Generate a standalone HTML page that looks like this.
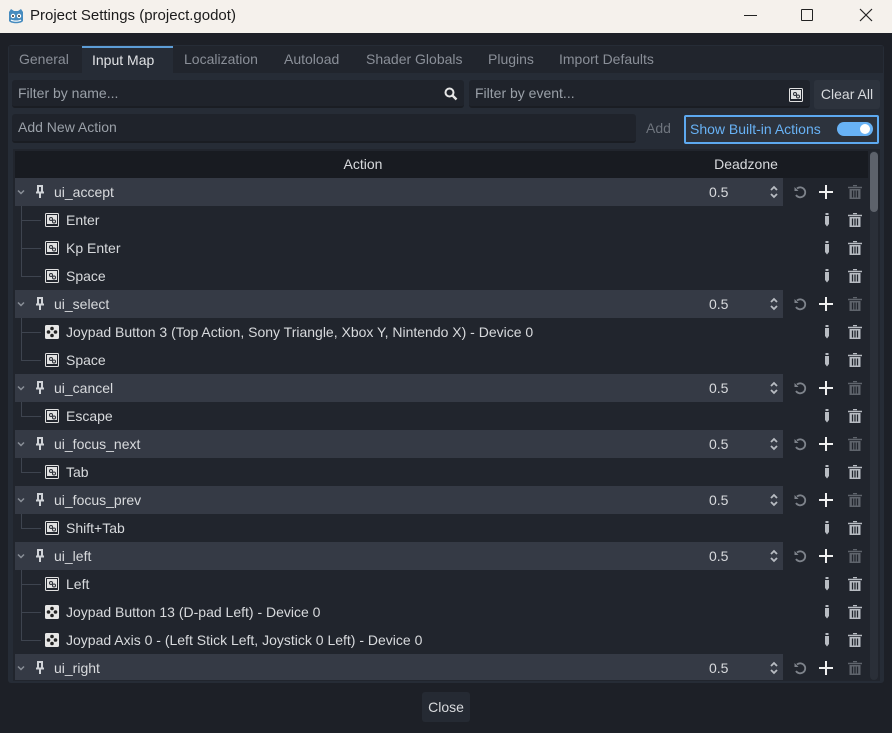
<!DOCTYPE html>
<html><head><meta charset="utf-8">
<style>
*{margin:0;padding:0;box-sizing:border-box}
body{width:892px;height:733px;overflow:hidden;background:#1d2027;font-family:"Liberation Sans",sans-serif;font-size:14px;color:#d8dadd;position:relative}
.a{position:absolute}
#title{left:0;top:0;width:892px;height:33px;background:#f5f1ec;color:#1b1b1b;font-size:15px}
#panel{left:8px;top:45px;width:876px;height:638px;background:#262c36;border-radius:3px}
.tab{top:46px;height:27px;line-height:27px;color:#8a8f98;padding:0 10px}
.inp{background:#1f232b;border-radius:3px;border-bottom:2px solid #1a1d23;color:#9aa0a8;padding-left:6px;line-height:27px}
#tree{left:13px;top:149px;width:867px;height:532px;background:#21252d}
.hdr{top:151px;height:27px;background:#181b21;color:#d8dadd;line-height:27px;text-align:center}
.row{left:15px;width:853px;height:28px}
.act{background:#353a45;width:768px;height:28px;position:absolute;left:0;top:0}
.nm{position:absolute;top:0;line-height:28px}
.ic{position:absolute}
.vl{position:absolute;left:0;top:0;width:1px;background:#3e444f}
.hl{position:absolute;height:1px;background:#3e444f}
</style></head><body>
<svg width="0" height="0" style="position:absolute">
<defs>
<symbol id="pin" viewBox="0 0 12 14"><path d="M3 1h6M4 1v6M8 1v6M2 7.5h8M6 8v5" stroke="#d0d3d8" stroke-width="2" fill="none"/></symbol>
<symbol id="chev" viewBox="0 0 10 10"><path d="M2 3.5l3 3 3-3" stroke="#8a8f98" stroke-width="1.5" fill="none"/></symbol>
<symbol id="key" viewBox="0 0 14 14"><rect x="0.5" y="0.5" width="13" height="13" fill="none" stroke="#e0e0e0" rx="1"/><rect x="2" y="2" width="10" height="9" fill="#e0e0e0"/><circle cx="6" cy="6" r="2" fill="#2a2e36"/><circle cx="9" cy="8.5" r="2" fill="#2a2e36"/><circle cx="6" cy="6" r="1" fill="#e0e0e0"/><circle cx="9" cy="8.5" r="1" fill="#e0e0e0"/></symbol>
<symbol id="joy" viewBox="0 0 14 14"><rect width="14" height="14" rx="1.5" fill="#e6e6e6"/><circle cx="7" cy="3.5" r="1.8" fill="#222"/><circle cx="7" cy="10.5" r="1.8" fill="#222"/><circle cx="3.5" cy="7" r="1.8" fill="#222"/><circle cx="10.5" cy="7" r="1.8" fill="#222"/></symbol>
<symbol id="spin" viewBox="0 0 10 16"><path d="M2 6l3-3 3 3M2 10l3 3 3-3" stroke="#b8bcc2" stroke-width="1.8" fill="none"/></symbol>
<symbol id="rev" viewBox="0 0 14 14"><path d="M4 3.5A5 5 0 1 1 3 10" stroke="#7e838b" stroke-width="1.8" fill="none"/><path d="M1.5 2v4h4z" fill="#7e838b"/></symbol>
<symbol id="plus" viewBox="0 0 14 14"><path d="M7 0v14M0 7h14" stroke="#f0f0f0" stroke-width="2"/></symbol>
<symbol id="trash" viewBox="0 0 14 14"><path d="M5 0.5h4M0 2.5h14" stroke="currentColor" stroke-width="1.6"/><path d="M1.5 4h11v10h-11z" fill="currentColor"/><path d="M4.5 5.5v7M7 5.5v7M9.5 5.5v7" stroke="#21252d" stroke-width="1.3"/></symbol>
<symbol id="pen" viewBox="0 0 6 14"><path d="M1 3h4v8l-2 2.5-2-2.5z" fill="#b8bcc2"/><rect x="1.5" y="0" width="3" height="2" fill="#b8bcc2"/></symbol>
</defs></svg>

<div id="title" class="a">
<svg class="a" style="left:7px;top:7px" width="18" height="18" viewBox="0 0 18 18"><path d="M2 5l2-3 3 2h4l3-2 2 3v9c-2 3-12 3-14 0z" fill="#478cbf"/><circle cx="6" cy="9" r="2.2" fill="#fff"/><circle cx="12" cy="9" r="2.2" fill="#fff"/><circle cx="6" cy="9" r="1" fill="#333"/><circle cx="12" cy="9" r="1" fill="#333"/><path d="M4 13c2 1.5 8 1.5 10 0" stroke="#fff" stroke-width="1.2" fill="none"/></svg>
<div class="a" style="left:30px;top:7px">Project Settings (project.godot)</div>
<div class="a" style="left:744px;top:15px;width:13px;height:1px;background:#222"></div>
<div class="a" style="left:801px;top:9px;width:12px;height:12px;border:1px solid #222;border-radius:1px"></div>
<svg class="a" style="left:859px;top:8px" width="14" height="14"><path d="M1 1l12 12M13 1L1 13" stroke="#222" stroke-width="1.2"/></svg>
</div>

<div id="panel" class="a"></div>
<div class="a" style="left:9px;top:46px;width:874px;height:27px;background:#21252d"></div>
<div class="a tab" style="left:9px">General</div>
<div class="a tab" style="left:82px;width:91px;background:#262c36;color:#e0e2e5;border-top:2px solid #5d9dd6;line-height:25px">Input Map</div>
<div class="a tab" style="left:174px">Localization</div>
<div class="a tab" style="left:274px">Autoload</div>
<div class="a tab" style="left:356px">Shader Globals</div>
<div class="a tab" style="left:478px">Plugins</div>
<div class="a tab" style="left:549px">Import Defaults</div>

<div class="a inp" style="left:12px;top:80px;width:452px;height:28px">Filter by name...</div>
<svg class="a" style="left:444px;top:87px" width="14" height="14"><circle cx="5.5" cy="5.5" r="4" stroke="#e6e6e6" stroke-width="2" fill="none"/><path d="M8.5 8.5l4 4" stroke="#e6e6e6" stroke-width="2.4"/></svg>
<div class="a inp" style="left:469px;top:80px;width:341px;height:28px">Filter by event...</div>
<svg class="a" style="left:789px;top:88px" width="14" height="14"><use href="#key"/></svg>
<div class="a" style="left:814px;top:80px;width:66px;height:29px;background:#2d333d;border-radius:3px;line-height:29px;text-align:center;color:#d8dadd">Clear All</div>
<div class="a inp" style="left:12px;top:114px;width:624px;height:29px">Add New Action</div>
<div class="a" style="left:646px;top:114px;line-height:29px;color:#6e747d">Add</div>
<div class="a" style="left:684px;top:115px;width:195px;height:29px;border:2px solid #5da9f0;border-radius:2px;background:#2d333d;color:#68b2f5;line-height:25px;padding-left:4px">Show Built-in Actions</div>
<div class="a" style="left:837px;top:122px;width:36px;height:14px;border-radius:7px;background:#68b2f5"></div>
<div class="a" style="left:860px;top:124px;width:10px;height:10px;border-radius:5px;background:#fff"></div>

<div id="tree" class="a"></div>
<div class="a hdr" style="left:15px;width:696px">Action</div>
<div class="a hdr" style="left:704px;width:84px;background:#181b21">Deadzone</div>
<div class="a" style="left:788px;top:151px;width:80px;height:27px;background:#181b21"></div>
<div class="a" style="left:870px;top:151px;width:8px;height:529px;background:#2a2f38;border-radius:4px"></div>
<div class="a" style="left:870px;top:152px;width:8px;height:60px;background:#5d626b;border-radius:4px"></div>

<div class="a" style="left:15px;top:178px;width:853px;height:502px;overflow:hidden">
<!-- tree content, positioned relative, y offset = absolute-178 -->
<div style="position:relative">
<!-- helper: action rows -->
<div class="a" style="left:0;top:0;width:853px;height:28px"><div class="act"></div><svg class="ic" style="left:1px;top:9px" width="10" height="10"><use href="#chev"/></svg><svg class="ic" style="left:19px;top:7px" width="12" height="14"><use href="#pin"/></svg><div class="nm" style="left:39px">ui_accept</div><div class="nm" style="left:694px">0.5</div><svg class="ic" style="left:754px;top:6px" width="10" height="16"><use href="#spin"/></svg><svg class="ic" style="left:778px;top:7px" width="14" height="14"><use href="#rev"/></svg><svg class="ic" style="left:804px;top:7px" width="14" height="14"><use href="#plus"/></svg><svg class="ic" style="left:833px;top:7px;color:#5f646c" width="14" height="14"><use href="#trash"/></svg></div>
<div class="a" style="left:0;top:28px;width:853px;height:84px"><div class="vl" style="left:6px;top:0;height:70px"></div><div class="hl" style="left:6px;top:14px;width:20px"></div><div class="hl" style="left:6px;top:42px;width:20px"></div><div class="hl" style="left:6px;top:70px;width:20px"></div>
<svg class="ic" style="left:30px;top:7px" width="14" height="14"><use href="#key"/></svg><div class="nm" style="left:51px">Enter</div>
<svg class="ic" style="left:30px;top:35px" width="14" height="14"><use href="#key"/></svg><div class="nm" style="left:51px;top:28px">Kp Enter</div>
<svg class="ic" style="left:30px;top:63px" width="14" height="14"><use href="#key"/></svg><div class="nm" style="left:51px;top:56px">Space</div>
<svg class="ic" style="left:809px;top:7px" width="6" height="14"><use href="#pen"/></svg><svg class="ic" style="left:833px;top:7px;color:#b8bcc2" width="14" height="14"><use href="#trash"/></svg>
<svg class="ic" style="left:809px;top:35px" width="6" height="14"><use href="#pen"/></svg><svg class="ic" style="left:833px;top:35px;color:#b8bcc2" width="14" height="14"><use href="#trash"/></svg>
<svg class="ic" style="left:809px;top:63px" width="6" height="14"><use href="#pen"/></svg><svg class="ic" style="left:833px;top:63px;color:#b8bcc2" width="14" height="14"><use href="#trash"/></svg></div>

<div class="a" style="left:0;top:112px;width:853px;height:28px"><div class="act"></div><svg class="ic" style="left:1px;top:9px" width="10" height="10"><use href="#chev"/></svg><svg class="ic" style="left:19px;top:7px" width="12" height="14"><use href="#pin"/></svg><div class="nm" style="left:39px">ui_select</div><div class="nm" style="left:694px">0.5</div><svg class="ic" style="left:754px;top:6px" width="10" height="16"><use href="#spin"/></svg><svg class="ic" style="left:778px;top:7px" width="14" height="14"><use href="#rev"/></svg><svg class="ic" style="left:804px;top:7px" width="14" height="14"><use href="#plus"/></svg><svg class="ic" style="left:833px;top:7px;color:#5f646c" width="14" height="14"><use href="#trash"/></svg></div>
<div class="a" style="left:0;top:140px;width:853px;height:56px"><div class="vl" style="left:6px;height:42px"></div><div class="hl" style="left:6px;top:14px;width:20px"></div><div class="hl" style="left:6px;top:42px;width:20px"></div>
<svg class="ic" style="left:30px;top:7px" width="14" height="14"><use href="#joy"/></svg><div class="nm" style="left:51px">Joypad Button 3 (Top Action, Sony Triangle, Xbox Y, Nintendo X) - Device 0</div>
<svg class="ic" style="left:30px;top:35px" width="14" height="14"><use href="#key"/></svg><div class="nm" style="left:51px;top:28px">Space</div>
<svg class="ic" style="left:809px;top:7px" width="6" height="14"><use href="#pen"/></svg><svg class="ic" style="left:833px;top:7px;color:#b8bcc2" width="14" height="14"><use href="#trash"/></svg>
<svg class="ic" style="left:809px;top:35px" width="6" height="14"><use href="#pen"/></svg><svg class="ic" style="left:833px;top:35px;color:#b8bcc2" width="14" height="14"><use href="#trash"/></svg></div>

<div class="a" style="left:0;top:196px;width:853px;height:28px"><div class="act"></div><svg class="ic" style="left:1px;top:9px" width="10" height="10"><use href="#chev"/></svg><svg class="ic" style="left:19px;top:7px" width="12" height="14"><use href="#pin"/></svg><div class="nm" style="left:39px">ui_cancel</div><div class="nm" style="left:694px">0.5</div><svg class="ic" style="left:754px;top:6px" width="10" height="16"><use href="#spin"/></svg><svg class="ic" style="left:778px;top:7px" width="14" height="14"><use href="#rev"/></svg><svg class="ic" style="left:804px;top:7px" width="14" height="14"><use href="#plus"/></svg><svg class="ic" style="left:833px;top:7px;color:#5f646c" width="14" height="14"><use href="#trash"/></svg></div>
<div class="a" style="left:0;top:224px;width:853px;height:28px"><div class="vl" style="left:6px;height:14px"></div><div class="hl" style="left:6px;top:14px;width:20px"></div>
<svg class="ic" style="left:30px;top:7px" width="14" height="14"><use href="#key"/></svg><div class="nm" style="left:51px">Escape</div>
<svg class="ic" style="left:809px;top:7px" width="6" height="14"><use href="#pen"/></svg><svg class="ic" style="left:833px;top:7px;color:#b8bcc2" width="14" height="14"><use href="#trash"/></svg></div>

<div class="a" style="left:0;top:252px;width:853px;height:28px"><div class="act"></div><svg class="ic" style="left:1px;top:9px" width="10" height="10"><use href="#chev"/></svg><svg class="ic" style="left:19px;top:7px" width="12" height="14"><use href="#pin"/></svg><div class="nm" style="left:39px">ui_focus_next</div><div class="nm" style="left:694px">0.5</div><svg class="ic" style="left:754px;top:6px" width="10" height="16"><use href="#spin"/></svg><svg class="ic" style="left:778px;top:7px" width="14" height="14"><use href="#rev"/></svg><svg class="ic" style="left:804px;top:7px" width="14" height="14"><use href="#plus"/></svg><svg class="ic" style="left:833px;top:7px;color:#5f646c" width="14" height="14"><use href="#trash"/></svg></div>
<div class="a" style="left:0;top:280px;width:853px;height:28px"><div class="vl" style="left:6px;height:14px"></div><div class="hl" style="left:6px;top:14px;width:20px"></div>
<svg class="ic" style="left:30px;top:7px" width="14" height="14"><use href="#key"/></svg><div class="nm" style="left:51px">Tab</div>
<svg class="ic" style="left:809px;top:7px" width="6" height="14"><use href="#pen"/></svg><svg class="ic" style="left:833px;top:7px;color:#b8bcc2" width="14" height="14"><use href="#trash"/></svg></div>

<div class="a" style="left:0;top:308px;width:853px;height:28px"><div class="act"></div><svg class="ic" style="left:1px;top:9px" width="10" height="10"><use href="#chev"/></svg><svg class="ic" style="left:19px;top:7px" width="12" height="14"><use href="#pin"/></svg><div class="nm" style="left:39px">ui_focus_prev</div><div class="nm" style="left:694px">0.5</div><svg class="ic" style="left:754px;top:6px" width="10" height="16"><use href="#spin"/></svg><svg class="ic" style="left:778px;top:7px" width="14" height="14"><use href="#rev"/></svg><svg class="ic" style="left:804px;top:7px" width="14" height="14"><use href="#plus"/></svg><svg class="ic" style="left:833px;top:7px;color:#5f646c" width="14" height="14"><use href="#trash"/></svg></div>
<div class="a" style="left:0;top:336px;width:853px;height:28px"><div class="vl" style="left:6px;height:14px"></div><div class="hl" style="left:6px;top:14px;width:20px"></div>
<svg class="ic" style="left:30px;top:7px" width="14" height="14"><use href="#key"/></svg><div class="nm" style="left:51px">Shift+Tab</div>
<svg class="ic" style="left:809px;top:7px" width="6" height="14"><use href="#pen"/></svg><svg class="ic" style="left:833px;top:7px;color:#b8bcc2" width="14" height="14"><use href="#trash"/></svg></div>

<div class="a" style="left:0;top:364px;width:853px;height:28px"><div class="act"></div><svg class="ic" style="left:1px;top:9px" width="10" height="10"><use href="#chev"/></svg><svg class="ic" style="left:19px;top:7px" width="12" height="14"><use href="#pin"/></svg><div class="nm" style="left:39px">ui_left</div><div class="nm" style="left:694px">0.5</div><svg class="ic" style="left:754px;top:6px" width="10" height="16"><use href="#spin"/></svg><svg class="ic" style="left:778px;top:7px" width="14" height="14"><use href="#rev"/></svg><svg class="ic" style="left:804px;top:7px" width="14" height="14"><use href="#plus"/></svg><svg class="ic" style="left:833px;top:7px;color:#5f646c" width="14" height="14"><use href="#trash"/></svg></div>
<div class="a" style="left:0;top:392px;width:853px;height:84px"><div class="vl" style="left:6px;height:70px"></div><div class="hl" style="left:6px;top:14px;width:20px"></div><div class="hl" style="left:6px;top:42px;width:20px"></div><div class="hl" style="left:6px;top:70px;width:20px"></div>
<svg class="ic" style="left:30px;top:7px" width="14" height="14"><use href="#key"/></svg><div class="nm" style="left:51px">Left</div>
<svg class="ic" style="left:30px;top:35px" width="14" height="14"><use href="#joy"/></svg><div class="nm" style="left:51px;top:28px">Joypad Button 13 (D-pad Left) - Device 0</div>
<svg class="ic" style="left:30px;top:63px" width="14" height="14"><use href="#joy"/></svg><div class="nm" style="left:51px;top:56px">Joypad Axis 0 - (Left Stick Left, Joystick 0 Left) - Device 0</div>
<svg class="ic" style="left:809px;top:7px" width="6" height="14"><use href="#pen"/></svg><svg class="ic" style="left:833px;top:7px;color:#b8bcc2" width="14" height="14"><use href="#trash"/></svg>
<svg class="ic" style="left:809px;top:35px" width="6" height="14"><use href="#pen"/></svg><svg class="ic" style="left:833px;top:35px;color:#b8bcc2" width="14" height="14"><use href="#trash"/></svg>
<svg class="ic" style="left:809px;top:63px" width="6" height="14"><use href="#pen"/></svg><svg class="ic" style="left:833px;top:63px;color:#b8bcc2" width="14" height="14"><use href="#trash"/></svg></div>

<div class="a" style="left:0;top:476px;width:853px;height:28px"><div class="act"></div><svg class="ic" style="left:1px;top:9px" width="10" height="10"><use href="#chev"/></svg><svg class="ic" style="left:19px;top:7px" width="12" height="14"><use href="#pin"/></svg><div class="nm" style="left:39px">ui_right</div><div class="nm" style="left:694px">0.5</div><svg class="ic" style="left:754px;top:6px" width="10" height="16"><use href="#spin"/></svg><svg class="ic" style="left:778px;top:7px" width="14" height="14"><use href="#rev"/></svg><svg class="ic" style="left:804px;top:7px" width="14" height="14"><use href="#plus"/></svg><svg class="ic" style="left:833px;top:7px;color:#5f646c" width="14" height="14"><use href="#trash"/></svg></div>
</div></div>

<div class="a" style="left:422px;top:692px;width:48px;height:30px;background:#252a33;border-radius:3px;line-height:30px;text-align:center;color:#d8dadd">Close</div>
</body></html>
